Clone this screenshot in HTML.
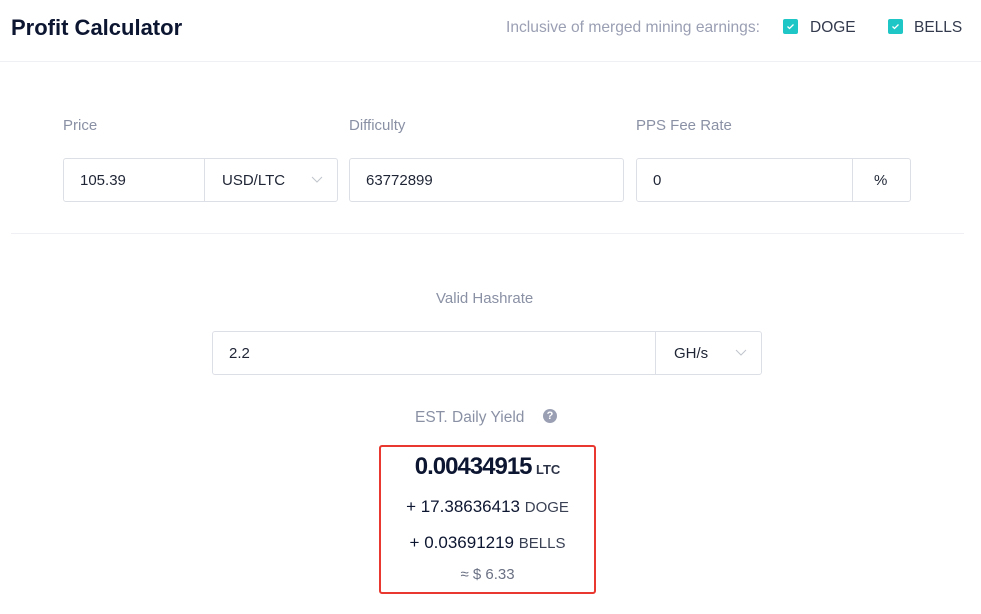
<!DOCTYPE html>
<html><head><style>
body{margin:0;width:981px;height:614px;background:#fff;font-family:"Liberation Sans",sans-serif;position:relative;overflow:hidden}
.a{position:absolute}
.t{color:#8a91a5;font-size:15px}
.box{position:absolute;border:1px solid #dcdfe6;border-radius:3px;box-sizing:border-box;font-size:15px;color:#1f2535}
.cb{position:absolute;width:15px;height:15px;background:#1fc6c6;border-radius:2px}
.cb svg{position:absolute;left:1px;top:1px}
.chev{position:absolute}
</style></head><body>
<div class="a" style="left:11px;top:15px;font-size:22px;font-weight:bold;color:#0d1631">Profit Calculator</div>
<div class="a t" style="left:506px;top:19px;font-size:15.6px;color:#9a9fb3">Inclusive of merged mining earnings:</div>
<div class="cb" style="left:783px;top:19px"><svg width="13" height="13" viewBox="0 0 13 13"><path d="M3.5 6.5l2 2 4-4" stroke="#fff" stroke-width="1.3" fill="none"/></svg></div>
<div class="a" style="left:810px;top:19px;font-size:15.5px;color:#333a4d">DOGE</div>
<div class="cb" style="left:888px;top:19px"><svg width="13" height="13" viewBox="0 0 13 13"><path d="M3.5 6.5l2 2 4-4" stroke="#fff" stroke-width="1.3" fill="none"/></svg></div>
<div class="a" style="left:914px;top:19px;font-size:15.5px;color:#333a4d">BELLS</div>
<div class="a" style="left:0;top:61px;width:981px;height:1px;background:#eef0f3"></div>

<div class="a t" style="left:63px;top:117px">Price</div>
<div class="a t" style="left:349px;top:117px">Difficulty</div>
<div class="a t" style="left:636px;top:117px">PPS Fee Rate</div>
<div class="box" style="left:63px;top:158px;width:275px;height:44px"></div>
<div class="a" style="left:204px;top:158px;width:1px;height:44px;background:#dcdfe6"></div>
<div class="a" style="left:80px;top:172px;font-size:15px;color:#1f2535">105.39</div>
<div class="a" style="left:222px;top:172px;font-size:15px;color:#1f2535">USD/LTC</div>
<svg class="chev" style="left:311px;top:176px" width="12" height="8"><path d="M1 1l5 5 5-5" stroke="#c0c4cc" fill="none"/></svg>
<div class="box" style="left:349px;top:158px;width:275px;height:44px"></div>
<div class="a" style="left:366px;top:172px;font-size:15px;color:#1f2535">63772899</div>
<div class="box" style="left:636px;top:158px;width:275px;height:44px"></div>
<div class="a" style="left:852px;top:158px;width:1px;height:44px;background:#dcdfe6"></div>
<div class="a" style="left:653px;top:172px;font-size:15px;color:#1f2535">0</div>
<div class="a" style="left:874px;top:172px;font-size:15px;color:#1f2535">%</div>
<div class="a" style="left:11px;top:233px;width:953px;height:1px;background:#eef0f3"></div>

<div class="a t" style="left:436px;top:290px">Valid Hashrate</div>
<div class="box" style="left:212px;top:331px;width:550px;height:44px"></div>
<div class="a" style="left:655px;top:331px;width:1px;height:44px;background:#dcdfe6"></div>
<div class="a" style="left:229px;top:345px;font-size:15px;color:#1f2535">2.2</div>
<div class="a" style="left:674px;top:345px;font-size:15px;color:#1f2535">GH/s</div>
<svg class="chev" style="left:735px;top:349px" width="12" height="8"><path d="M1 1l5 5 5-5" stroke="#c0c4cc" fill="none"/></svg>

<div class="a t" style="left:415px;top:409px;font-size:15.5px">EST. Daily Yield</div>
<div class="a" style="left:543px;top:409px;width:14px;height:14px;border-radius:50%;background:#9a9fb3;color:#fff;font-size:11px;font-weight:bold;text-align:center;line-height:14px">?</div>
<div class="a" style="left:379px;top:445px;width:217px;height:149px;border:2px solid #e8382f;border-radius:3px;box-sizing:border-box"></div>
<div class="a" style="left:379px;top:453px;width:217px;text-align:center;color:#0d1631"><span style="font-size:24px;font-weight:bold;letter-spacing:-1px">0.00434915</span> <span style="font-size:13px;font-weight:bold;color:#2c3347">LTC</span></div>
<div class="a" style="left:379px;top:497px;width:217px;text-align:center;font-size:17px;color:#0d1631">+ 17.38636413 <span style="font-size:15px;color:#3a4154">DOGE</span></div>
<div class="a" style="left:379px;top:533px;width:217px;text-align:center;font-size:17px;color:#0d1631">+ 0.03691219 <span style="font-size:15px;color:#3a4154">BELLS</span></div>
<div class="a" style="left:379px;top:566px;width:217px;text-align:center;font-size:15px;color:#6b7184">≈ $ 6.33</div>
</body></html>
